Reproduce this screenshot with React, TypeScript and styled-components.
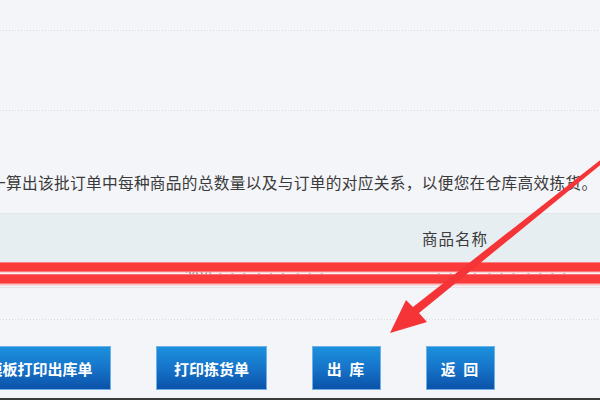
import React from 'react'
import styled, { createGlobalStyle } from 'styled-components'

const GlobalStyle = createGlobalStyle`
    html, body {
        margin: 0;
        padding: 0;
        background: #f4f5f9;
        overflow: hidden;
    }
`

const buttons = [
    { label: '模板打印出库单', wide: true },
    { label: '打印拣货单' },
    { label: '出 库', spaced: true },
    { label: '返 回', spaced: true },
]

const App: React.FC = () => {
    return (
        <Page>
            <GlobalStyle />
            <Dotted $top={30} />
            <Dotted $top={79} />
            <Description>一算出该批订单中每种商品的总数量以及与订单的对应关系，以便您在仓库高效拣货。</Description>
            <HeaderRow>
                <HeadCell />
                <HeadCell>商品名称</HeadCell>
                <HeadCell />
            </HeaderRow>
            <DataRow>
                <Cell />
                <Cell>2019 ··· ··· ···</Cell>
                <Cell>—— ···· ··· ····</Cell>
                <RedMark />
            </DataRow>
            <Dotted $top={31} />
            <ButtonBar>
                {buttons.map((b) => (
                    <ActionButton key={b.label} $wide={b.wide} $spaced={b.spaced}>
                        {b.label}
                    </ActionButton>
                ))}
            </ButtonBar>
            <BottomBar />
            <Arrow viewBox="0 0 600 400">
                <polygon
                    fill="#f43436"
                    points="390,333 406,300 413,307 618,146 620,149 419,313 427,322"
                />
            </Arrow>
        </Page>
    )
}

const Page = styled.div`
    position: relative;
    width: 600px;
    height: 400px;
    overflow: hidden;
    display: flex;
    flex-direction: column;
    font-family: "Noto Sans CJK SC", "Noto Sans", sans-serif;
    color: #333;
`
const Dotted = styled.div<{ $top: number }>`
    margin-top: ${(p) => p.$top}px;
    height: 1px;
    background-image: repeating-linear-gradient(
        to right,
        #d9dbe1 0px,
        #d9dbe1 1px,
        transparent 1px,
        transparent 3px
    );
`
const Description = styled.p`
    margin: 60px 0 0 -10px;
    height: 24px;
    line-height: 24px;
    font-size: 15.7px;
    letter-spacing: 0.3px;
    white-space: nowrap;
    color: #3a3a3a;
`
const HeaderRow = styled.div`
    margin-top: 18px;
    height: 48px;
    display: grid;
    grid-template-columns: 370px 170px 1fr;
    align-items: center;
    background: #e7eef2;
    border-top: 1px solid #e2e8ec;
`
const HeadCell = styled.div`
    text-align: center;
    font-size: 15.5px;
    letter-spacing: 1px;
    color: #3b3b3b;
`
const DataRow = styled.div`
    position: relative;
    height: 25px;
    display: grid;
    grid-template-columns: 185px 225px 1fr;
    align-items: center;
    background: #f7f8fb;
    border-bottom: 1px solid #e1e3e8;
`
const Cell = styled.div`
    font-size: 12px;
    color: #6a4a4c;
    white-space: nowrap;
`
const RedMark = styled.div`
    position: absolute;
    left: 0;
    right: 0;
    top: 0;
    height: 24px;
    background: linear-gradient(
        to bottom,
        #f9c6c8 0px,
        #fb3a3c 1px,
        #fb3a3c 9px,
        #f9b4b6 10px,
        rgba(255, 230, 232, 0.2) 11px,
        rgba(255, 230, 232, 0.2) 12px,
        #fa9fa2 12px,
        #fb3a3c 13px,
        #fb3a3c 21px,
        #f9b9bb 22px,
        #fbe0e2 24px
    );
`
const ButtonBar = styled.div`
    margin: 26px 0 0 -31px;
    display: flex;
    gap: 45px;
`
const ActionButton = styled.button<{ $wide?: boolean; $spaced?: boolean }>`
    height: 44px;
    width: ${(p) => (p.$wide ? '142px' : p.$spaced ? '69px' : '111px')};
    padding: 0;
    border: 1px solid #6fb0e6;
    background: linear-gradient(to bottom, #1b90dd 0%, #1674c9 50%, #0b52aa 100%);
    color: #fff;
    font-family: "Noto Sans CJK SC", sans-serif;
    font-weight: 700;
    font-size: 15px;
    letter-spacing: ${(p) => (p.$spaced ? '2px' : '0')};
    white-space: pre;
    cursor: pointer;
`
const BottomBar = styled.div`
    margin-top: auto;
    height: 2px;
    background: #3a3a3a;
`
const Arrow = styled.svg`
    position: absolute;
    left: 0;
    top: 0;
    width: 600px;
    height: 400px;
    pointer-events: none;
`

export default App
